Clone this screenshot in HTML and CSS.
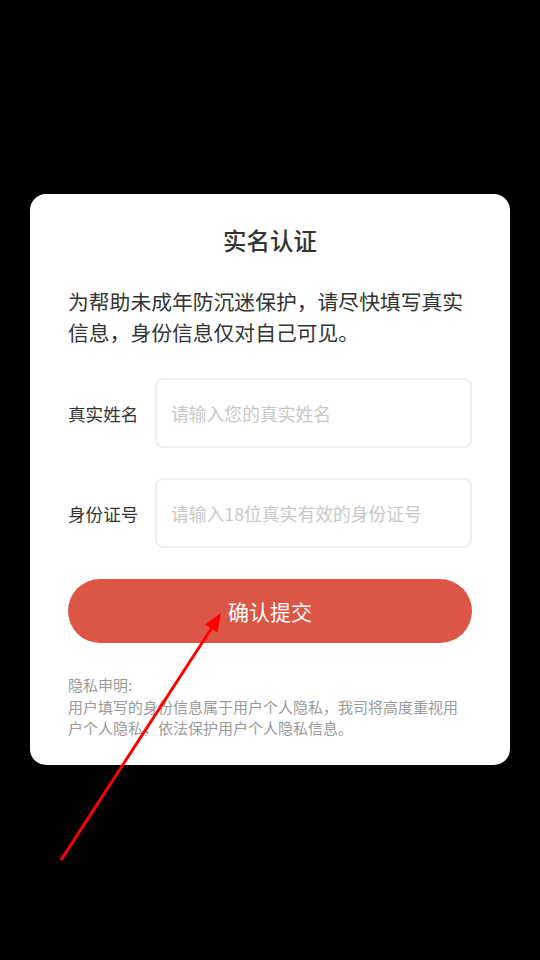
FILE: index.html
```html
<!DOCTYPE html>
<html lang="zh-CN">
<head>
<meta charset="utf-8">
<title>实名认证</title>
<link rel="stylesheet" href="styles.css">
</head>
<body>
<div class="page">
  <div class="card">
    <h1 class="title">实名认证</h1>
    <p class="intro">为帮助未成年防沉迷保护，请尽快填写真实信息，身份信息仅对自己可见。</p>
    <div class="field">
      <label class="label">真实姓名</label>
      <div class="input"><span class="placeholder">请输入您的真实姓名</span></div>
    </div>
    <div class="field">
      <label class="label">身份证号</label>
      <div class="input"><span class="placeholder">请输入18位真实有效的身份证号</span></div>
    </div>
    <button class="submit">确认提交</button>
    <div class="privacy">
      <div>隐私申明:</div>
      <div>用户填写的身份信息属于用户个人隐私，我司将高度重视用户个人隐私，依法保护用户个人隐私信息。</div>
    </div>
  </div>
  <svg class="arrow" width="540" height="960" viewBox="0 0 540 960">
    <line x1="61" y1="860" x2="213" y2="626" stroke="#f00" stroke-width="3"/>
    <polygon points="221,613 217.5,632.5 205,624.5" fill="#f00"/>
  </svg>
</div>
</body>
</html>
```
FILE: styles.css
```css
html, body {
  margin: 0;
  padding: 0;
  background: #000;
}
body {
  font-family: "Noto Sans CJK SC", "Noto Sans", sans-serif;
  width: 540px;
  height: 960px;
  overflow: hidden;
}
.page {
  position: relative;
  width: 540px;
  height: 960px;
  padding-top: 194px;
  box-sizing: border-box;
}
.card {
  margin-left: 30px;
  width: 480px;
  background: #fff;
  border-radius: 16px;
  padding: 30px 38px 26px;
  box-sizing: border-box;
}
.title {
  margin: 0;
  text-align: center;
  font-size: 23.5px;
  line-height: 32px;
  font-weight: 500;
  color: #333;
}
.intro {
  margin: 30px 0 30px;
  font-size: 20.8px;
  line-height: 31px;
  color: #333;
}
.field {
  display: flex;
  align-items: center;
  margin-bottom: 30px;
}
.label {
  width: 87px;
  font-size: 17.6px;
  color: #333;
  flex: none;
}
.input {
  flex: 1;
  height: 70px;
  border: 2px solid #efefef;
  border-radius: 8px;
  box-sizing: border-box;
  display: flex;
  align-items: center;
  padding-left: 14px;
}
.placeholder {
  font-size: 17.8px;
  color: #c8c8c8;
}
.submit {
  display: block;
  width: 100%;
  height: 64px;
  margin-top: 31px;
  border: none;
  border-radius: 32px;
  background: #dc5546;
  color: #fff;
  font-family: inherit;
  font-size: 21px;
}
.privacy {
  margin-top: 31px;
  font-size: 15px;
  line-height: 21.5px;
  color: #9a9a9a;
}
.arrow {
  position: absolute;
  left: 0;
  top: 0;
  pointer-events: none;
}
```
